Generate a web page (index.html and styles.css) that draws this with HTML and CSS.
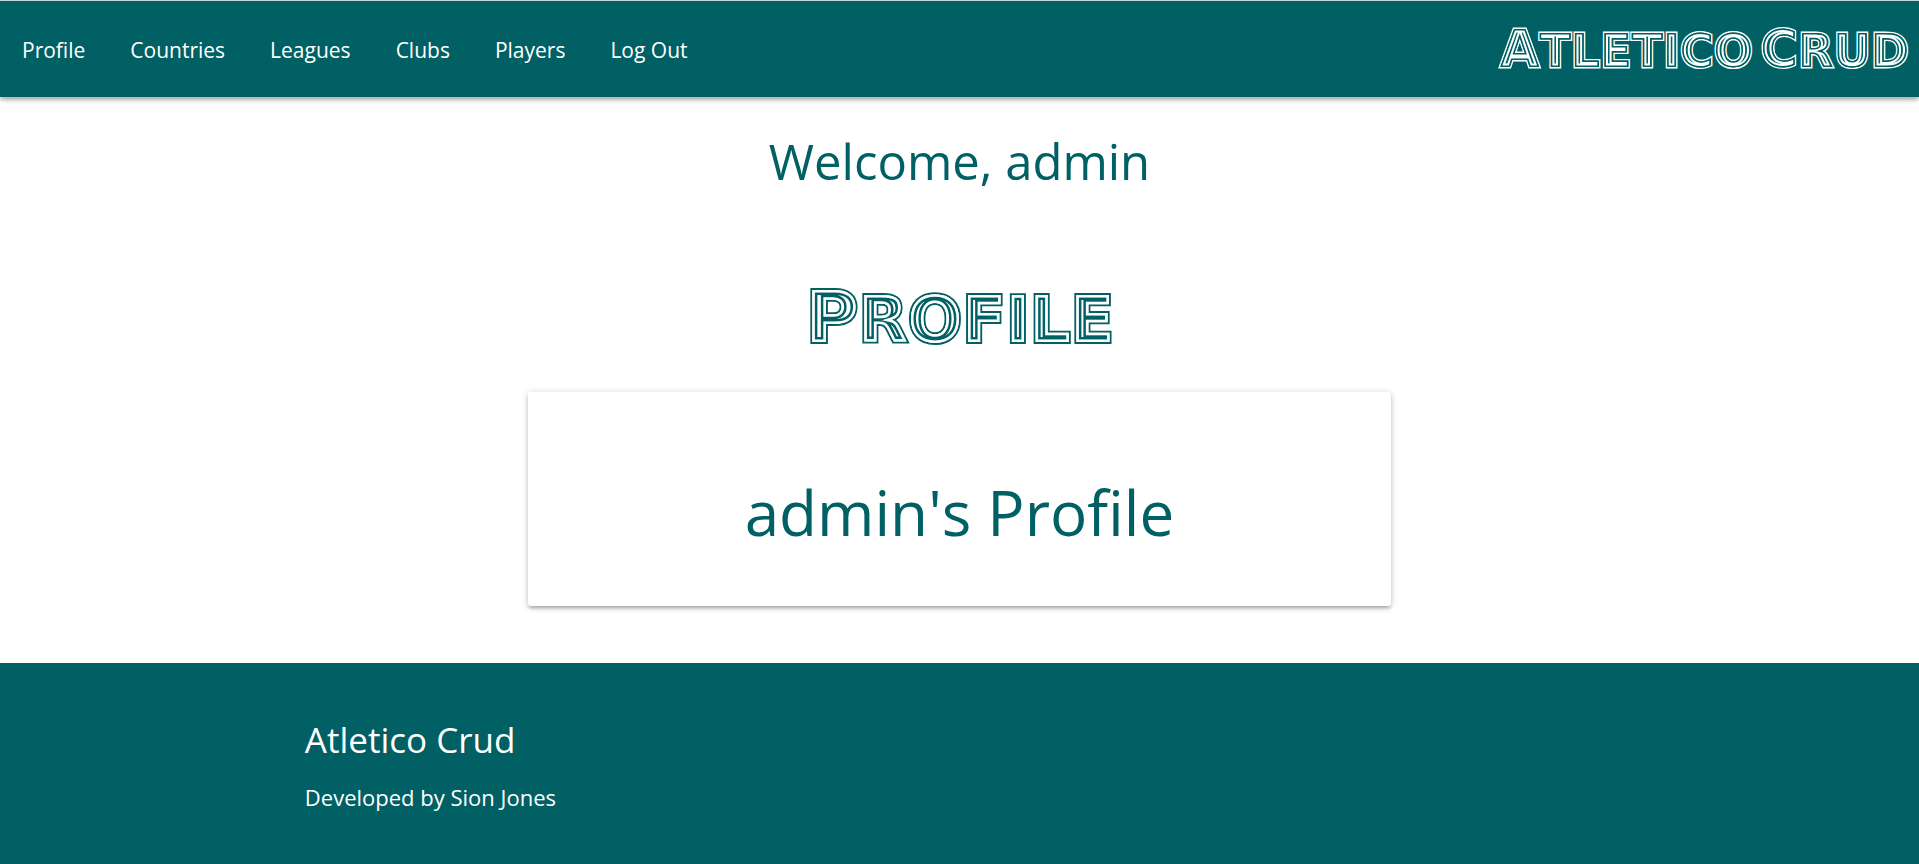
FILE: index.html
```html
<!DOCTYPE html>
<html lang="en">
<head>
<meta charset="utf-8">
<title>Atletico Crud</title>
<link rel="stylesheet" href="styles.css">
</head>
<body>
<nav class="navbar">
  <ul class="nav-links">
    <li><a href="#profile">Profile</a></li>
    <li><a href="#countries">Countries</a></li>
    <li><a href="#leagues">Leagues</a></li>
    <li><a href="#clubs">Clubs</a></li>
    <li><a href="#players">Players</a></li>
    <li><a href="#logout">Log Out</a></li>
  </ul>
  <a class="brand" href="#home">
    <svg class="neon neon-brand" width="424" height="60" viewBox="0 0 424 60">
      <defs>
        <clipPath id="brand-clip"><use href="#brand-text"/></clipPath>
      </defs>
      <use class="outline" href="#brand-text"/>
      <text id="brand-text" x="414" y="48" text-anchor="end">A<tspan class="small">tletico</tspan><tspan class="space"> </tspan>C<tspan class="small">rud</tspan></text>
      <g clip-path="url(#brand-clip)">
        <use class="ring line" href="#brand-text"/>
        <use class="ring gap" href="#brand-text"/>
      </g>
    </svg>
  </a>
</nav>
<main>
  <h3 class="welcome">Welcome, admin</h3>
  <h2 class="page-title">
    <svg class="neon neon-title" width="340" height="88" viewBox="0 0 340 88">
      <defs>
        <clipPath id="title-clip"><use href="#title-text"/></clipPath>
      </defs>
      <use class="outline" href="#title-text"/>
      <text id="title-text" x="170" y="69" text-anchor="middle">P<tspan class="small">rofile</tspan></text>
      <g clip-path="url(#title-clip)">
        <use class="ring line" href="#title-text"/>
        <use class="ring gap" href="#title-text"/>
      </g>
    </svg>
  </h2>
  <section class="card">
    <h1>admin's Profile</h1>
  </section>
</main>
<footer class="footer">
  <div class="footer-inner">
    <h5>Atletico Crud</h5>
    <p>Developed by Sion Jones</p>
  </div>
</footer>
</body>
</html>
```
FILE: styles.css
```css
* { box-sizing: border-box; }

body {
  --teal: #006064;
  margin: 0;
  min-height: 100vh;
  display: flex;
  flex-direction: column;
  background: #fff;
  color: var(--teal);
  font-family: "Segoe UI", "Open Sans", sans-serif;
  font-size: 22px;
}

h1, h2, h3, h5, p { margin: 0; font-weight: 400; }

.navbar {
  display: flex;
  justify-content: space-between;
  align-items: center;
  height: 97px;
  background: var(--teal);
  border-top: 1px solid #c5dcdb;
  box-shadow: 0 3px 3px rgba(0, 0, 0, .14), 0 4px 7px -2px rgba(0, 0, 0, .12), 0 1px 7px rgba(0, 0, 0, .2);
}

.nav-links {
  display: flex;
  gap: 1px;
  margin: 0;
  padding: 0;
  list-style: none;
}

.nav-links a {
  display: block;
  padding: 2px 22px 0;
  font-size: 21px;
  line-height: 94px;
  color: #fff;
  text-decoration: none;
}

.brand { display: flex; }

/* Striped lettering: an outline round the letters and a second line inside them */
.neon {
  display: block;
  overflow: visible;
  fill: var(--gap);
  font-family: "DejaVu Sans", sans-serif;
  font-weight: 700;
  text-transform: uppercase;
}

.ring { fill: none; }
.outline, .line { stroke: var(--line); }
.gap { stroke: var(--gap); }

.neon-brand { --line: #fff; --gap: #006064; font-size: 51px; }
.neon-brand .small { font-size: 46px; }
.neon-brand .space { font-size: 22px; }
.neon-brand .outline { stroke-width: 3px; }
.neon-brand .line { stroke-width: 7px; }
.neon-brand .gap { stroke-width: 3px; }

.neon-title { --line: #006064; --gap: #fff; font-size: 72px; }
.neon-title .small { font-size: 64px; }
.neon-title .outline { stroke-width: 4px; }
.neon-title .line { stroke-width: 10px; }
.neon-title .gap { stroke-width: 5px; }

main {
  display: flex;
  flex-direction: column;
  align-items: center;
  padding-bottom: 57px;
}

.welcome {
  margin-top: 36px;
  font-size: 49px;
  line-height: 56px;
}

.page-title { margin-top: 84px; }

.card {
  width: 45%;
  margin-top: 31px;
  padding: 76px 34px 50px;
  border-radius: 3px;
  background: #fff;
  text-align: center;
  box-shadow: 0 3px 3px rgba(0, 0, 0, .14), 0 4px 2px -3px rgba(0, 0, 0, .12), 0 1px 7px rgba(0, 0, 0, .2);
}

.card h1 {
  font-size: 62px;
  line-height: 88px;
}

.footer {
  flex: 1;
  padding: 56px 0 48px;
  background: var(--teal);
  color: #fff;
}

.footer-inner {
  width: 70%;
  margin: 0 auto;
  padding: 0 17px;
}

.footer h5 {
  font-size: 35px;
  line-height: 42px;
}

.footer p {
  margin-top: 20px;
  line-height: 32px;
}
```
